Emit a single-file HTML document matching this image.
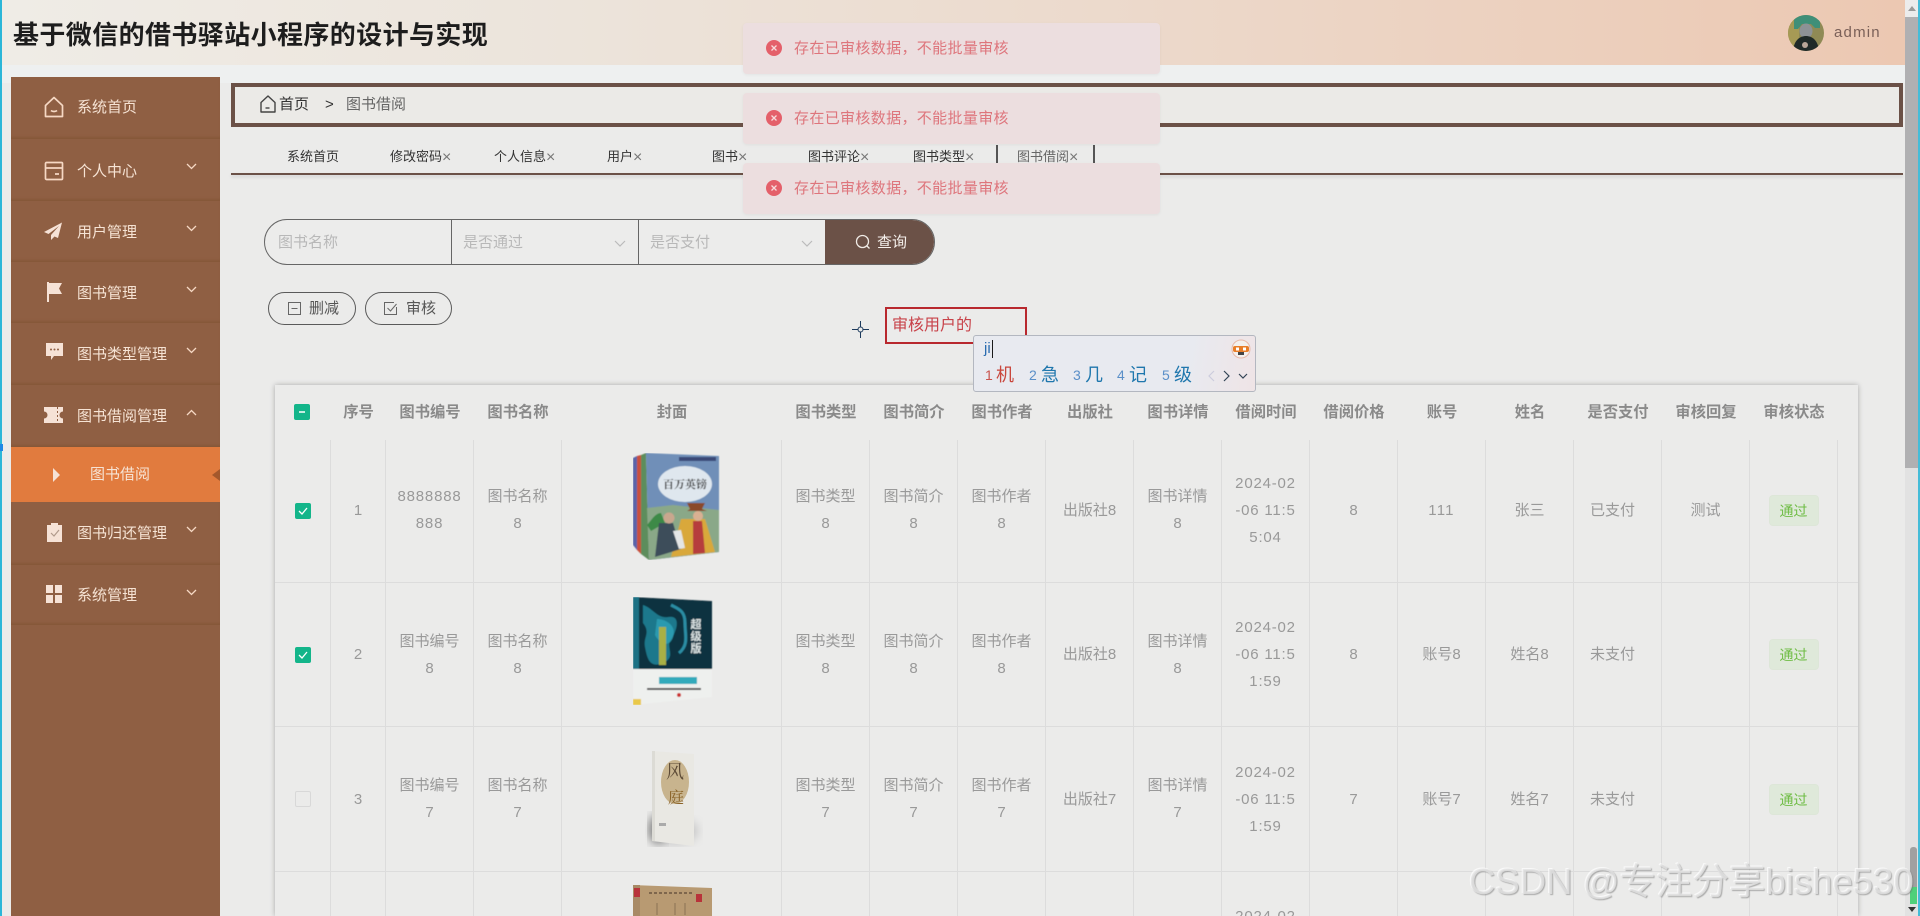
<!DOCTYPE html>
<html lang="zh"><head><meta charset="utf-8"><title>图书借阅</title>
<style>
*{box-sizing:border-box;margin:0;padding:0}
html,body{width:1920px;height:916px;overflow:hidden;background:#ebebea;font-family:"Liberation Sans","Noto Sans CJK SC",sans-serif}
.a{position:absolute}
#hd{left:0;top:0;width:1905px;height:65px;background:linear-gradient(90deg,#efece6 0%,#ece4db 30%,#ecd9cb 60%,#ecc8b2 100%)}
#band{left:0;top:65px;width:1905px;height:18px;background:#eef0f0}
#title{left:13px;top:17px;font-size:26px;letter-spacing:.4px;font-weight:700;line-height:36px;color:#1d1d1d;white-space:nowrap}
#side{left:11px;top:77px;width:209px;height:839px;background:#8f5f43}
.it{position:absolute;left:0;width:209px;background:#8f5f43;box-shadow:inset 0 -3px 2px -1px #865739}
.tx{position:absolute;left:66px;font-size:15px;line-height:20px;color:#f6e3d4;white-space:nowrap;margin-top:1px}
.ic{position:absolute;left:33px}
.ar{position:absolute;left:175px}
#bc{left:231px;top:83px;width:1672px;height:44px;border:4px solid #6b5147;background:#ebeae7}
.t13{position:absolute;top:148px;font-size:13px;line-height:18px;color:#333;white-space:nowrap}
.t13 i{font-style:normal;color:#777;font-size:16px;line-height:18px;font-weight:400;vertical-align:-1px}
#tl{left:231px;top:173px;width:1672px;height:2px;background:#6b5147;box-shadow:0 2px 3px rgba(0,0,0,.12)}
#sr{left:264px;top:219px;width:671px;height:46px;border:1px solid #666;border-radius:23px;overflow:hidden;background:#ececeb}
.ph{position:absolute;top:13px;font-size:15px;line-height:20px;color:#b8b8b8}
.btn{position:absolute;top:292px;height:33px;border:1px solid #5a5a5a;border-radius:17px}
.btn span{position:absolute;top:6px;font-size:15px;line-height:20px;color:#555}
.toast{position:absolute;left:743px;width:417px;height:51px;background:#ecdedf;border-radius:4px;box-shadow:0 1px 3px rgba(0,0,0,.05)}
.toast svg{position:absolute;left:23px;top:17px}
.toast span{position:absolute;left:51px;top:16px;font-size:15px;letter-spacing:.35px;line-height:20px;color:#de757c;white-space:nowrap}
#tw{left:275px;top:385px;width:1583px;height:531px;background:#ebebea;box-shadow:0 0 5px rgba(0,0,0,.28);overflow:hidden}
table{border-collapse:separate;border-spacing:0;table-layout:fixed;width:1583px;color:#999;font-size:15px;line-height:27px;text-align:center}
th{height:55px;font-weight:700;color:#8a8a8a;vertical-align:middle;padding:0;font-size:15.300px}
td{border-right:1px solid #dcdcdc;border-bottom:1px solid #dcdcdc;vertical-align:middle;padding:0 4px;word-break:break-all;overflow:hidden}
td.n{border-right:none}
tr.r1 td{padding-bottom:2px}
tr.l td{border-bottom:none;padding:0;height:44px}
.d{letter-spacing:.8px}
.cb{display:inline-block;width:16px;height:16px;border-radius:2px;background:#13b58a;vertical-align:middle;position:relative}
.tag{display:inline-block;width:50px;height:31px;line-height:30px;background:#dfe9da;border:1px solid #dde6d8;border-radius:4px;color:#6fbd45;font-size:14px;letter-spacing:0}
.b{position:absolute}
#ime{left:973px;top:335px;width:283px;height:57px;background:linear-gradient(100deg,#e8eaf0 75%,#efe4e6 100%);border:1px solid #b3b7c0;border-radius:3px}
#ime span{position:absolute;line-height:24px;white-space:nowrap}
.num{font-size:14px}.cc{font-size:18px;color:#1f77ad}
#wm{left:1469px;top:859px;font-size:36.500px;line-height:46px;color:rgba(228,228,228,.8);text-shadow:1px 1px 1px rgba(110,110,110,.5),-1px -1px 0 rgba(255,255,255,.7);white-space:nowrap}
</style></head><body>

<div class="a" id="band"></div>
<div class="a" id="hd"></div>
<div class="a" id="title">基于微信的借书驿站小程序的设计与实现</div>

<svg class="a" style="left:1788px;top:15px" width="36" height="36" viewBox="0 0 36 36"><defs><clipPath id="av"><ellipse cx="18" cy="18" rx="18" ry="18"/></clipPath></defs><g clip-path="url(#av)"><rect width="36" height="36" fill="#8f8a55"/><rect x="0" width="11" height="36" fill="#a69a55"/><path d="M6 0h26v13H27l-4-4H14l-4 5H6z" fill="#3f8f78"/><ellipse cx="18" cy="16" rx="6.500" ry="7.500" fill="#8d9296"/><path d="M5 36c1-11 7-15 13-15s12 4 13 15z" fill="#1f2a28"/><circle cx="17" cy="30" r="3" fill="#b8a698"/></g></svg>
<div class="a" style="left:1834px;top:23px;font-size:15px;letter-spacing:1.200px;line-height:20px;color:#7a6058">admin</div>

<div class="a" id="side">
<div class="it" style="top:0;height:62px"><svg class="ic" style="top:19px" width="20" height="22" viewBox="0 0 20 22" fill="none" stroke="#f6d8c4" stroke-width="1.700"><path d="M1.500 9.500 10 1.500l8.500 8v11h-17z" stroke-linejoin="round"/><path d="M7 14.500c1.500 1.300 4.500 1.300 6 0"/></svg><div class="tx" style="top:20px">系统首页</div></div>
<div class="it" style="top:62px;height:62px"><svg class="ic" style="top:22px" width="20" height="20" viewBox="0 0 20 20" fill="none" stroke="#f6d8c4" stroke-width="1.700"><rect x="1.500" y="1.500" width="17" height="17" rx="1"/><path d="M1.500 7h17M11 13h4"/></svg><div class="tx" style="top:22px">个人中心</div><svg class="ar" style="top:24px" width="11" height="7" viewBox="0 0 11 7" fill="none" stroke="#f6d8c4" stroke-width="1.300"><path d="m1 1 4.500 4.500L10 1"/></svg></div>
<div class="it" style="top:124px;height:61px"><svg class="ic" style="top:21px" width="19" height="19" viewBox="0 0 19 19"><path d="M18 .5 0 10l4.500 2L15 4 7 13v5l3.500-3.500 3.500 1.500z" fill="#f6e2d6"/></svg><div class="tx" style="top:21px">用户管理</div><svg class="ar" style="top:24px" width="11" height="7" viewBox="0 0 11 7" fill="none" stroke="#f6d8c4" stroke-width="1.300"><path d="m1 1 4.500 4.500L10 1"/></svg></div>
<div class="it" style="top:185px;height:61px"><svg class="ic" style="top:20px;left:36px" width="16" height="20" viewBox="0 0 16 20"><path d="M0 0h2v20H0z" fill="#f6e2d6"/><path d="M2 1h13l-3 5.500 3 5.500H2z" fill="#f6e2d6"/></svg><div class="tx" style="top:21px">图书管理</div><svg class="ar" style="top:24px" width="11" height="7" viewBox="0 0 11 7" fill="none" stroke="#f6d8c4" stroke-width="1.300"><path d="m1 1 4.500 4.500L10 1"/></svg></div>
<div class="it" style="top:246px;height:62px"><svg class="ic" style="top:20px;left:35px" width="17" height="17" viewBox="0 0 17 17"><path d="M0 0h17v13H8l-3 4v-4H0z" fill="#f6e2d6"/><circle cx="5" cy="6.500" r="1" fill="#8f5f43"/><circle cx="8.500" cy="6.500" r="1" fill="#8f5f43"/><circle cx="12" cy="6.500" r="1" fill="#8f5f43"/></svg><div class="tx" style="top:21px">图书类型管理</div><svg class="ar" style="top:24px" width="11" height="7" viewBox="0 0 11 7" fill="none" stroke="#f6d8c4" stroke-width="1.300"><path d="m1 1 4.500 4.500L10 1"/></svg></div>
<div class="it" style="top:308px;height:62px"><svg class="ic" style="top:22px" width="19" height="16" viewBox="0 0 19 16"><path d="M0 0h13l2 0h4v4.500a3.500 3.500 0 0 0 0 7V16H0v-4.500a3.500 3.500 0 0 0 0-7z" fill="#f6e2d6"/><path d="M13.500 0v16" stroke="#8f5f43" stroke-dasharray="2 2"/></svg><div class="tx" style="top:21px">图书借阅管理</div><svg class="ar" style="top:24px" width="11" height="7" viewBox="0 0 11 7" fill="none" stroke="#f6d8c4" stroke-width="1.300"><path d="m1 6 4.500-4.500L10 6"/></svg></div>
<div class="it" style="top:370px;height:55px;background:#e17b3e;box-shadow:none"><svg class="ic" style="top:21px;left:42px" width="7" height="14" viewBox="0 0 7 14"><path d="M0 0l7 7-7 7z" fill="#f6e2d6"/></svg><div class="tx" style="top:17px;left:79px">图书借阅</div><svg class="a" style="left:201px;top:22px" width="8" height="12" viewBox="0 0 8 12"><path d="M8 0 0 6l8 6z" fill="#a4582c"/></svg></div>
<div class="it" style="top:425px;height:63px"><svg class="ic" style="top:20px;left:36px" width="15" height="20" viewBox="0 0 15 20"><path d="M0 3h4V1h7v2h4v17H0z" fill="#f6e2d6"/><path d="m4 11 3 3 5-6" stroke="#b19a8b" fill="none" stroke-width="1.200"/></svg><div class="tx" style="top:21px">图书归还管理</div><svg class="ar" style="top:24px" width="11" height="7" viewBox="0 0 11 7" fill="none" stroke="#f6d8c4" stroke-width="1.300"><path d="m1 1 4.500 4.500L10 1"/></svg></div>
<div class="it" style="top:488px;height:60px"><svg class="ic" style="top:20px;left:35px" width="16" height="18" viewBox="0 0 16 18" fill="#f6e2d6"><rect width="7" height="8"/><rect x="9" width="7" height="8"/><rect y="10" width="7" height="8"/><rect x="9" y="10" width="7" height="8"/></svg><div class="tx" style="top:20px">系统管理</div><svg class="ar" style="top:24px" width="11" height="7" viewBox="0 0 11 7" fill="none" stroke="#f6d8c4" stroke-width="1.300"><path d="m1 1 4.500 4.500L10 1"/></svg></div>
</div>

<div class="a" id="bc"></div>
<svg class="a" style="left:259px;top:95px" width="18" height="18" viewBox="0 0 18 18" fill="none" stroke="#444" stroke-width="1.400"><path d="M2 7.500 9 1l7 6.500V17H2z" stroke-linejoin="round"/><path d="M6.500 13h4"/></svg>
<div class="a" style="left:279px;top:95px;font-size:15px;line-height:20px;color:#333">首页</div>
<div class="a" style="left:325px;top:95px;font-size:15px;line-height:20px;color:#333">&gt;</div>
<div class="a" style="left:346px;top:95px;font-size:15px;line-height:20px;color:#666">图书借阅</div>

<div class="t13" style="left:287px">系统首页</div>
<div class="t13" style="left:390px">修改密码<i>×</i></div>
<div class="t13" style="left:494px">个人信息<i>×</i></div>
<div class="t13" style="left:607px">用户<i>×</i></div>
<div class="t13" style="left:712px">图书<i>×</i></div>
<div class="t13" style="left:808px">图书评论<i>×</i></div>
<div class="t13" style="left:913px">图书类型<i>×</i></div>
<div class="a" style="left:996px;top:145px;width:2px;height:18px;background:#555"></div>
<div class="t13" style="left:1017px;color:#666">图书借阅<i>×</i></div>
<div class="a" style="left:1093px;top:145px;width:2px;height:18px;background:#555"></div>
<div class="a" id="tl"></div>

<div class="a" id="sr">
<div class="ph" style="left:13px">图书名称</div>
<div class="a" style="left:186px;top:0;width:1px;height:46px;background:#666"></div>
<div class="ph" style="left:198px">是否通过</div>
<svg class="a" style="left:349px;top:20px" width="12" height="8" viewBox="0 0 12 8" fill="none" stroke="#bbb" stroke-width="1.200"><path d="m1 1 5 5 5-5"/></svg>
<div class="a" style="left:373px;top:0;width:1px;height:46px;background:#666"></div>
<div class="ph" style="left:385px">是否支付</div>
<svg class="a" style="left:536px;top:20px" width="12" height="8" viewBox="0 0 12 8" fill="none" stroke="#bbb" stroke-width="1.200"><path d="m1 1 5 5 5-5"/></svg>
<div class="a" style="left:560px;top:-1px;width:111px;height:46px;background:#6b5147"></div>
<svg class="a" style="left:590px;top:14px" width="16" height="16" viewBox="0 0 16 16" fill="none" stroke="#f0ebe6" stroke-width="1.300"><circle cx="7.500" cy="7.500" r="6"/><path d="m12 12 2.500 2.500"/></svg>
<div class="a" style="left:612px;top:13px;font-size:15px;line-height:20px;color:#f5f0ec">查询</div>
</div>

<div class="btn" style="left:268px;width:88px"><svg class="a" style="left:19px;top:9px" width="13" height="13" viewBox="0 0 13 13" fill="none" stroke="#666" stroke-width="1"><rect x=".5" y=".5" width="12" height="12"/><path d="M3.500 6.500h6"/></svg><span style="left:40px">删减</span></div>
<div class="btn" style="left:365px;width:87px"><svg class="a" style="left:18px;top:9px" width="14" height="14" viewBox="0 0 14 14" fill="none" stroke="#666" stroke-width="1"><path d="M12.500 5v7.500h-12v-12H10"/><path d="m3.500 6 3 3 6-7"/></svg><span style="left:40px">审核</span></div>

<div class="a" id="tw">
<table><colgroup><col style="width:56px"><col style="width:55px"><col style="width:88px"><col style="width:88px"><col style="width:220px"><col span="13" style="width:88px"><col style="width:20px"></colgroup>
<tr><th><span class="cb" style="left:-1px;top:-1px"><svg width="16" height="16" viewBox="0 0 16 16" style="display:block"><path d="M5 8h6" stroke="#fff" stroke-width="1.500"/></svg></span></th><th>序号</th><th>图书编号</th><th>图书名称</th><th>封面</th><th>图书类型</th><th>图书简介</th><th>图书作者</th><th>出版社</th><th>图书详情</th><th>借阅时间</th><th>借阅价格</th><th>账号</th><th>姓名</th><th>是否支付</th><th>审核回复</th><th>审核状态</th><th></th></tr>
<tr class="r1" style="height:143px"><td><span class="cb"><svg width="16" height="16" viewBox="0 0 16 16" style="display:block"><path d="m4 8 3 3 5-6" stroke="#fff" stroke-width="1.300" fill="none"/></svg></span></td><td>1</td><td class="d">8888888<br>888</td><td>图书名称<br>8</td><td></td><td>图书类型<br>8</td><td>图书简介<br>8</td><td>图书作者<br>8</td><td>出版社8</td><td>图书详情<br>8</td><td class="d">2024-02<br>-06 11:5<br>5:04</td><td>8</td><td style="letter-spacing:1.200px">111</td><td>张三</td><td><span style="position:relative;left:-5px">已支付</span></td><td>测试</td><td><span class="tag">通过</span></td><td class="n"></td></tr>
<tr style="height:144px"><td><span class="cb"><svg width="16" height="16" viewBox="0 0 16 16" style="display:block"><path d="m4 8 3 3 5-6" stroke="#fff" stroke-width="1.300" fill="none"/></svg></span></td><td>2</td><td>图书编号<br>8</td><td>图书名称<br>8</td><td></td><td>图书类型<br>8</td><td>图书简介<br>8</td><td>图书作者<br>8</td><td>出版社8</td><td>图书详情<br>8</td><td class="d">2024-02<br>-06 11:5<br>1:59</td><td>8</td><td>账号8</td><td>姓名8</td><td><span style="position:relative;left:-5px">未支付</span></td><td></td><td><span class="tag">通过</span></td><td class="n"></td></tr>
<tr style="height:145px"><td><span class="cb" style="top:-1px;background:transparent;border:1px solid #d8d8d8"></span></td><td>3</td><td>图书编号<br>7</td><td>图书名称<br>7</td><td></td><td>图书类型<br>7</td><td>图书简介<br>7</td><td>图书作者<br>7</td><td>出版社7</td><td>图书详情<br>7</td><td class="d">2024-02<br>-06 11:5<br>1:59</td><td>7</td><td>账号7</td><td>姓名7</td><td><span style="position:relative;left:-5px">未支付</span></td><td></td><td><span class="tag">通过</span></td><td class="n"></td></tr>
<tr class="l"><td></td><td></td><td></td><td></td><td></td><td></td><td></td><td></td><td></td><td></td><td class="d" style="vertical-align:top"><div style="height:44px;overflow:hidden;padding-top:31px">2024-02</div></td><td></td><td></td><td></td><td></td><td></td><td></td><td class="n"></td></tr>
</table>
</div>

<!-- book 1 -->
<svg class="b" style="left:633px;top:453px" width="87" height="107" viewBox="0 0 87 107">
<defs><filter id="s1"><feGaussianBlur stdDeviation=".6"/></filter></defs>
<g filter="url(#s1)">
<path d="M0 5 4 3v94l-4-5z" fill="#5a64a8"/><path d="M4 3l4-1v99l-4-4z" fill="#c8503c"/><path d="M8 2l5-2 3 107-8-6z" fill="#5d8d5c"/>
<path d="M13 0 86 3v96l-70 8z" fill="#6f8fb8"/>
<ellipse cx="52" cy="31" rx="27" ry="18" fill="#dfe7ee"/>
<text x="52" y="35" font-size="11" font-weight="700" text-anchor="middle" fill="#333" font-family="Liberation Serif,Noto Serif CJK SC,serif">百万英镑</text>
<rect x="46" y="4" width="37" height="4" fill="#3a4a77"/>
<path d="M14 55 40 52l46 5v42l-70 8z" fill="#8aa888"/>
<path d="M14 72c4-4 8-12 14-12l4 10-14 8z" fill="#3c8a47"/>
<path d="M48 66h24l10 33-44 5z" fill="#d9a83a"/><path d="M60 68h9l3 32-12 1z" fill="#b63c3c"/>
<path d="M54 50h18l-3 6 5 2H54l3-2z" fill="#8a4a2a"/><circle cx="65" cy="63" r="5" fill="#d9b092"/>
<path d="M26 70h14l8 26-26 8z" fill="#3e4d5a"/><circle cx="36" cy="65" r="5.500" fill="#c9a78e"/>
<path d="M40 78l6 18 6-1-4-18z" fill="#e4e6e6"/>
</g></svg>
<!-- book 2 -->
<svg class="b" style="left:633px;top:597px" width="80" height="108" viewBox="0 0 80 108">
<g filter="url(#s1)">
<path d="M0 0 79 4v96L0 108z" fill="#eef0ee"/>
<path d="M0 0 79 4v68L0 72z" fill="#10333f"/>
<path d="M0 0h6v72H0z" fill="#1a7184"/>
<path d="M10 8c10 3 14 14 26 12s8 14 2 22 6 18-8 24-16-6-18-16 6-14-2-24z" fill="#1f7f95" opacity=".9"/>
<path d="M24 22c8 0 20 6 16 18s-14 6-18-2z" fill="#2fa3b8" opacity=".8"/>
<path d="M38 8c8 4 14 6 14 18s4 22-6 30" stroke="#2a8da4" stroke-width="3" fill="none"/>
<rect x="26" y="30" width="7" height="38" fill="#a9b045"/>
<text x="63" y="31" font-size="11" font-weight="700" text-anchor="middle" fill="#dfe6e6">超</text><text x="63" y="43" font-size="11" font-weight="700" text-anchor="middle" fill="#dfe6e6">级</text><text x="63" y="55" font-size="11" font-weight="700" text-anchor="middle" fill="#dfe6e6">版</text>
<rect x="26" y="80" width="38" height="7" fill="#33aabb"/>
<rect x="14" y="91" width="54" height="2" fill="#555"/>
<rect x="0" y="102" width="8" height="6" fill="#e9c84a"/>
<circle cx="46" cy="98" r="2" fill="#c33"/>
</g></svg>
<!-- book 3 -->
<svg class="b" style="left:640px;top:751px" width="70" height="100" viewBox="0 0 70 100">
<defs><filter id="bl"><feGaussianBlur stdDeviation="5"/></filter></defs>
<ellipse cx="34" cy="80" rx="24" ry="13" fill="#c4c4c4" filter="url(#bl)"/>
<ellipse cx="18" cy="78" rx="9" ry="15" fill="#808080" filter="url(#bl)"/>
<path d="M12 0 54 3v92l-42-5z" fill="#e9e8e3"/>
<path d="M12 0h3v90h-3z" fill="#dcdbd5"/>
<ellipse cx="35" cy="31" rx="14" ry="22" fill="#c8b48e"/>
<text x="35" y="27" font-size="18" text-anchor="middle" fill="#5c4a36" font-family="Liberation Serif,Noto Serif CJK SC,serif">风</text>
<text x="36" y="52" font-size="16" text-anchor="middle" fill="#8a6328" font-family="Liberation Serif,Noto Serif CJK SC,serif">庭</text>
<rect x="19" y="72" width="7" height="3" fill="#aaa"/>
</svg>
<!-- book 4 -->
<svg class="b" style="left:633px;top:885px" width="80" height="31" viewBox="0 0 80 31">
<path d="M0 0 79 3v28H0z" fill="#b89a72"/><rect x="0" y="0" width="7" height="31" fill="#a88a66"/><rect x="1" y="3" width="6" height="9" fill="#b8333a"/><rect x="63" y="9" width="6" height="8" fill="#b8333a"/><path d="M16 8h44" stroke="#6b5540" stroke-width="1.500" stroke-dasharray="3 2"/>
<path d="M24 18v12M42 18v12M52 18v12" stroke="#8a7254"/>
</svg>

<!-- toasts -->
<div class="toast" style="top:23px"><svg width="16" height="16" viewBox="0 0 16 16"><circle cx="8" cy="8" r="8" fill="#e4606a"/><path d="m5.500 5.500 5 5m0-5-5 5" stroke="#f6dcdc" stroke-width="1.300"/></svg><span>存在已审核数据，不能批量审核</span></div>
<div class="toast" style="top:93px"><svg width="16" height="16" viewBox="0 0 16 16"><circle cx="8" cy="8" r="8" fill="#e4606a"/><path d="m5.500 5.500 5 5m0-5-5 5" stroke="#f6dcdc" stroke-width="1.300"/></svg><span>存在已审核数据，不能批量审核</span></div>
<div class="toast" style="top:163px"><svg width="16" height="16" viewBox="0 0 16 16"><circle cx="8" cy="8" r="8" fill="#e4606a"/><path d="m5.500 5.500 5 5m0-5-5 5" stroke="#f6dcdc" stroke-width="1.300"/></svg><span>存在已审核数据，不能批量审核</span></div>

<!-- annotation -->
<div class="a" style="left:885px;top:307px;width:142px;height:37px;border:2px solid #b8282e"></div>
<div class="a" style="left:892px;top:315px;font-size:16px;line-height:22px;color:#c8434a">审核用户的</div>
<svg class="a" style="left:852px;top:321px" width="17" height="17" viewBox="0 0 17 17" fill="none" stroke="#1c3a5c" stroke-width="1"><path d="M8.500 0v6M8.500 11v6M0 8.500h6M11 8.500h6"/><circle cx="8.500" cy="8.500" r="2.500"/></svg>
<div class="a" id="ime">
<span style="left:10px;top:1px;font-size:15px;color:#2a6cb0">ji</span><span style="left:18px;top:4px;width:1px;height:18px;background:#1a1a1a"></span>
<span class="num" style="left:11px;top:27px;color:#c9534c">1</span><span class="cc" style="left:22px;top:27px;color:#c9463c">机</span>
<span class="num" style="left:55px;top:27px;color:#5a8fc8">2</span><span class="cc" style="left:67px;top:27px">急</span>
<span class="num" style="left:99px;top:27px;color:#5a8fc8">3</span><span class="cc" style="left:111px;top:27px">几</span>
<span class="num" style="left:143px;top:27px;color:#5a8fc8">4</span><span class="cc" style="left:155px;top:27px">记</span>
<span class="num" style="left:188px;top:27px;color:#5a8fc8">5</span><span class="cc" style="left:200px;top:27px">级</span>
<svg class="a" style="left:233px;top:34px" width="50" height="12" viewBox="0 0 50 12" fill="none" stroke-width="1.200"><path d="M7 1 2 6l5 5" stroke="#ccd"/><path d="m17 1 5 5-5 5" stroke="#345"/><path d="m32 4 4 4 4-4" stroke="#345"/></svg>
<svg class="a" style="left:257px;top:2px" width="20" height="22" viewBox="0 0 20 22"><circle cx="10" cy="11" r="9" fill="#f3f0ee" stroke="#e7b9a9"/><rect x="2" y="8" width="16" height="6" rx="2" fill="#e87d28"/><rect x="5" y="9.500" width="3" height="3" fill="#fff"/><rect x="12" y="9.500" width="3" height="3" fill="#fff"/><rect x="7" y="14" width="6" height="3" fill="#444"/></svg>
</div>

<!-- scrollbar -->
<div class="a" style="left:1905px;top:0;width:14px;height:916px;background:#e2e2e2"></div>
<div class="a" style="left:1905px;top:17px;width:14px;height:451px;background:#b0b0b2"></div>
<svg class="a" style="left:1905px;top:0" width="14" height="17" viewBox="0 0 14 17"><rect width="14" height="17" fill="#ececec"/><path d="m7 6 4 5H3z" fill="#9a9a9a"/></svg>
<div class="a" style="left:1910px;top:847px;width:7px;height:42px;background:#a0a0a0;border-radius:3px 3px 0 0"></div>
<div class="a" style="left:1910px;top:887px;width:7px;height:17px;background:#4fd07a"></div>
<svg class="a" style="left:1905px;top:904px" width="14" height="10" viewBox="0 0 14 10"><path d="m7 8 4-5H3z" fill="#333"/></svg>
<div class="a" style="left:0;top:0;width:2px;height:916px;background:#2bb6d8"></div>
<div class="a" style="left:0;top:444px;width:3px;height:7px;background:#1e88e5"></div>
<div class="a" style="left:1918px;top:0;width:2px;height:916px;background:#45bcd8"></div>

<div class="a" id="wm">CSDN @专注分享bishe530</div>
</body></html>
